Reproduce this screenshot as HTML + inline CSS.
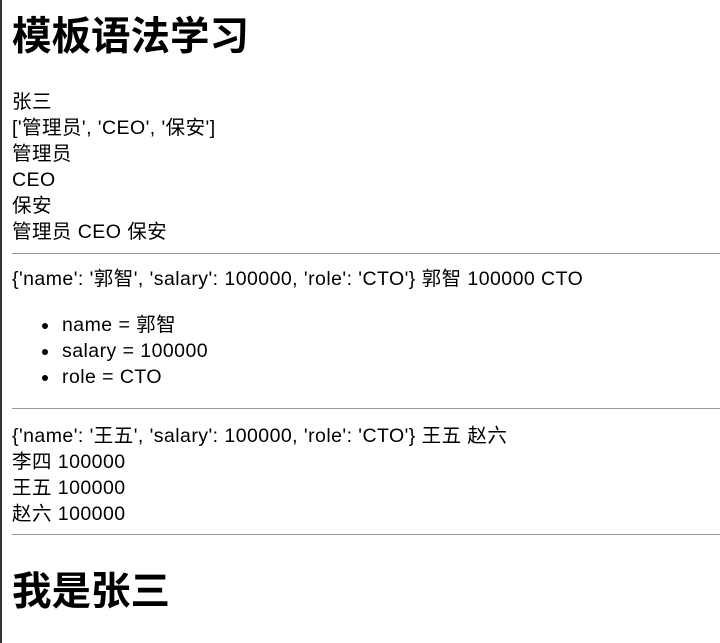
<!DOCTYPE html>
<html><head><meta charset="utf-8"><style>
html,body{margin:0;padding:0;background:#fff;width:720px;height:643px;overflow:hidden}
body{position:relative;font-family:"Liberation Sans","Noto Sans CJK SC",sans-serif;color:#000}
.bl{position:absolute;left:0;top:0;width:2px;height:643px;background:#333}
.t{position:absolute;left:12px;font-size:19.5px;letter-spacing:0.45px;line-height:26px;white-space:nowrap}
.h{position:absolute;left:12px;font-size:39.5px;line-height:48px;font-weight:bold;white-space:nowrap}
.hr{position:absolute;left:12px;width:708px;height:1px;background:#999}
.li{position:absolute;left:62px;font-size:19.5px;letter-spacing:0.45px;line-height:26px;white-space:nowrap}
.li:before{content:"";position:absolute;left:-20px;top:11px;width:6px;height:6px;border-radius:50%;background:#000}
</style></head><body>
<div class="bl"></div>
<div class="h" style="top:13px">模板语法学习</div>
<div class="t" style="top:89px">张三</div>
<div class="t" style="top:115px">['管理员', 'CEO', '保安']</div>
<div class="t" style="top:141px">管理员</div>
<div class="t" style="top:167px">CEO</div>
<div class="t" style="top:193px">保安</div>
<div class="t" style="top:219px">管理员 CEO 保安</div>
<div class="hr" style="top:253px"></div>
<div class="t" style="top:266px">{'name': '郭智', 'salary': 100000, 'role': 'CTO'} 郭智 100000 CTO</div>
<div class="li" style="top:312px">name = 郭智</div>
<div class="li" style="top:338px">salary = 100000</div>
<div class="li" style="top:364px">role = CTO</div>
<div class="hr" style="top:408px"></div>
<div class="t" style="top:423px">{'name': '王五', 'salary': 100000, 'role': 'CTO'} 王五 赵六</div>
<div class="t" style="top:449px">李四 100000</div>
<div class="t" style="top:475px">王五 100000</div>
<div class="t" style="top:501px">赵六 100000</div>
<div class="hr" style="top:534px"></div>
<div class="h" style="top:568px">我是张三</div>
</body></html>
